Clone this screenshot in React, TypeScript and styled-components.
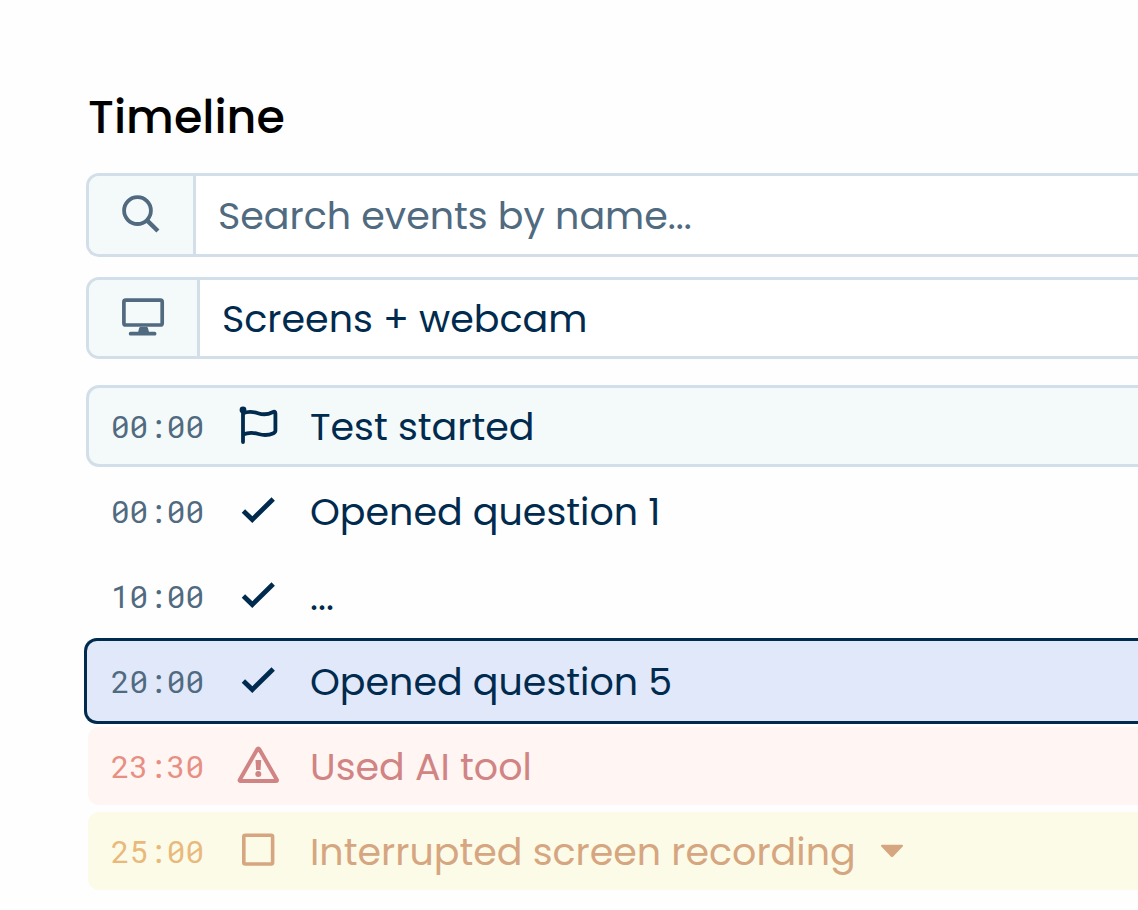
import React, { useState } from "react";
import styled, { createGlobalStyle, css } from "styled-components";

const ink = "#002b4e";
const muted = "#506a80";
const line = "#d3dfe8";
const tint = "#f4f9fa";

const GlobalStyle = createGlobalStyle`
  *, *::before, *::after { box-sizing: border-box; }
  body {
    margin: 0;
    background: #fefefe;
    font-family: Poppins, Inter, "Liberation Sans", sans-serif;
    color: ${ink};
  }
`;

const Panel = styled.main`
  padding: 83px 0 18px 86px;
`;

const Title = styled.h1`
  margin: 0 0 22px 2px;
  font-size: 46px;
  line-height: 68px;
  font-weight: 500;
  color: #000;
`;

const Field = styled.label<{ $height: number; $gap: number }>`
  display: flex;
  height: ${(p) => p.$height}px;
  margin-bottom: ${(p) => p.$gap}px;
  border: 3px solid ${line};
  border-right: 0;
  border-radius: 13px 0 0 13px;
  background: #fff;
  overflow: hidden;
`;

const Adornment = styled.span<{ $width: number }>`
  display: flex;
  flex: none;
  align-items: center;
  justify-content: center;
  width: ${(p) => p.$width}px;
  border-right: 3px solid ${line};
  background: ${tint};
  color: ${muted};
`;

const controlText = css`
  flex: 1;
  min-width: 0;
  margin: 0;
  padding: 0 22px;
  border: 0;
  outline: 0;
  background: transparent;
  appearance: none;
  font-family: inherit;
  font-size: 38px;
  color: ${ink};
`;

const SearchInput = styled.input`
  ${controlText}
  &::placeholder {
    color: ${muted};
    opacity: 1;
  }
`;

const ViewSelect = styled.select`
  ${controlText}
`;

const Events = styled.ul`
  display: flex;
  flex-direction: column;
  gap: 3px;
  margin: 0;
  padding: 0;
  list-style: none;
`;

type Tone = "start" | "plain" | "active" | "danger" | "warning";

const tones = {
  start: { bg: tint, border: line, time: muted, text: ink },
  plain: { bg: "transparent", border: "transparent", time: muted, text: ink },
  active: { bg: "#e1e8fa", border: ink, time: muted, text: ink },
  danger: { bg: "#fff5f2", border: "transparent", time: "#e88f84", text: "#d08484" },
  warning: { bg: "#fcfbe8", border: "transparent", time: "#e9b97c", text: "#d6a681" },
};

const EventButton = styled.button<{ $tone: Tone }>`
  display: flex;
  align-items: center;
  width: 100%;
  height: 82px;
  padding: 0 0 0 22px;
  border: 3px solid ${(p) => tones[p.$tone].border};
  border-right: 0;
  border-radius: 13px 0 0 13px;
  background: ${(p) => tones[p.$tone].bg};
  background-clip: padding-box;
  color: ${(p) => tones[p.$tone].text};
  font-family: inherit;
  font-size: 38px;
  line-height: 58px;
  text-align: left;
  white-space: nowrap;
  cursor: pointer;
  ${(p) =>
    p.$tone === "active" &&
    css`
      width: calc(100% + 2px);
      height: 86px;
      margin: -2px 0 -2px -2px;
      padding-left: 24px;
    `}
  ${(p) =>
    (p.$tone === "danger" || p.$tone === "warning") &&
    css`
      border-width: 2px 0 2px 2px;
      padding-left: 23px;
    `}
`;

const Time = styled.time<{ $tone: Tone }>`
  flex: none;
  width: 125px;
  font-family: "Roboto Mono", "DejaVu Sans Mono", monospace;
  font-size: 31px;
  color: ${(p) => tones[p.$tone].time};
`;

const Label = styled.span`
  margin-left: 30px;
  padding-top: 2px;
`;

const Icon = styled.svg`
  display: block;
  flex: none;
  width: 44px;
  height: 44px;
  fill: none;
  stroke: currentColor;
`;

const Caret = styled.svg`
  display: block;
  flex: none;
  width: 24px;
  height: 14px;
  margin-left: 24px;
`;

const SearchIcon = () => (
  <Icon viewBox="0 0 44 44" strokeWidth="3.8" aria-hidden="true">
    <circle cx="18.5" cy="17.6" r="13.4" />
    <path d="M28 27.4 38.9 38" strokeWidth="4.4" />
  </Icon>
);

const MonitorIcon = () => (
  <Icon viewBox="0 0 44 44" strokeWidth="3.7" aria-hidden="true">
    <rect x="2.9" y="4.2" width="38.3" height="24.8" rx="1.8" />
    <path d="M19.5 31h6.2q1 0 1.4 1.4l1 4.2H17l1-4.2q.4-1.4 1.5-1.4z" fill="currentColor" stroke="none" />
    <path d="M9.6 37.7h24" strokeLinecap="round" />
  </Icon>
);

const FlagIcon = () => (
  <Icon viewBox="0 0 44 44" strokeWidth="3.8" strokeLinejoin="round" aria-hidden="true">
    <circle cx="7" cy="6" r="3.4" fill="currentColor" stroke="none" />
    <path d="M7 6V38" strokeLinecap="round" />
    <path d="M7 9.2C13 6.7 17.5 7.7 22 9.2S31.5 10.8 36.5 8.2Q39.4 6.8 39.4 9.5V26.5Q39.4 28.3 37.5 29.2C32 31.7 27.5 31.5 22.5 30S13 27.9 7 30.6" />
  </Icon>
);

const CheckIcon = () => (
  <Icon viewBox="0 0 44 44" strokeWidth="4.8" aria-hidden="true">
    <path d="M7.4 22 16.3 30.6 37.2 10" />
  </Icon>
);

const AlertIcon = () => (
  <Icon viewBox="0 0 44 44" strokeWidth="4" strokeLinejoin="round" aria-hidden="true">
    <path d="M21.3 5.2Q22.3 3.7 23.3 5.2L40.8 35.7Q41.4 36.9 40 36.9H4.6Q3.2 36.9 3.8 35.7z" />
    <path d="M19.5 16h5.7l-.6 10h-4.5z" fill="currentColor" stroke="none" />
    <circle cx="22.3" cy="30" r="3" fill="currentColor" stroke="none" />
  </Icon>
);

const SquareIcon = () => (
  <Icon viewBox="0 0 44 44" strokeWidth="3.6" aria-hidden="true">
    <rect x="7.8" y="6.2" width="28.8" height="28.8" rx="1.5" />
  </Icon>
);

const events: { time: string; label: string; tone: Tone; icon: React.FC; more?: boolean }[] = [
  { time: "00:00", label: "Test started", tone: "start", icon: FlagIcon },
  { time: "00:00", label: "Opened question 1", tone: "plain", icon: CheckIcon },
  { time: "10:00", label: "...", tone: "plain", icon: CheckIcon },
  { time: "20:00", label: "Opened question 5", tone: "active", icon: CheckIcon },
  { time: "23:30", label: "Used AI tool", tone: "danger", icon: AlertIcon },
  { time: "25:00", label: "Interrupted screen recording", tone: "warning", icon: SquareIcon, more: true },
];

export default function App() {
  const [query, setQuery] = useState("");
  return (
    <>
      <GlobalStyle />
      <Panel>
        <Title>Timeline</Title>
        <Field $height={84} $gap={20}>
          <Adornment $width={107}>
            <SearchIcon />
          </Adornment>
          <SearchInput
            type="text"
            aria-label="Search events"
            placeholder="Search events by name..."
            value={query}
            onChange={(e) => setQuery(e.target.value)}
          />
        </Field>
        <Field $height={82} $gap={26}>
          <Adornment $width={111}>
            <MonitorIcon />
          </Adornment>
          <ViewSelect aria-label="View">
            <option>Screens + webcam</option>
          </ViewSelect>
        </Field>
        <Events>
          {events.map(({ time, label, tone, icon: Glyph, more }) => (
            <li key={time + label}>
              <EventButton type="button" $tone={tone} aria-current={tone === "active" || undefined}>
                <Time $tone={tone}>{time}</Time>
                <Glyph />
                <Label>{label}</Label>
                {more && (
                  <Caret viewBox="0 0 24 14" aria-hidden="true">
                    <path
                      d="M2 .8h20q1.7.2.7 1.7L13.2 12.6q-1.2 1-2.4 0L1.3 2.5Q.3 1 2 .8z"
                      fill="currentColor"
                    />
                  </Caret>
                )}
              </EventButton>
            </li>
          ))}
        </Events>
      </Panel>
    </>
  );
}
